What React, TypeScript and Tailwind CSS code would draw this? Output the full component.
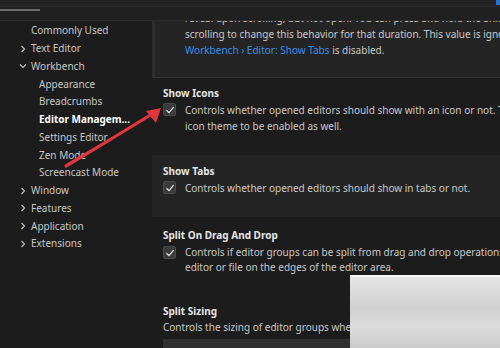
import React from "react";

const font = { fontFamily: '"Noto Sans", "Open Sans", sans-serif' };

function Chevron({ open }: { open?: boolean }) {
  return (
    <svg width="10" height="10" viewBox="0 0 10 10" className="shrink-0">
      {open ? (
        <path d="M2 3.5 L5 6.5 L8 3.5" fill="none" stroke="#c5c5c5" strokeWidth="1.1" />
      ) : (
        <path d="M3.5 2 L6.5 5 L3.5 8" fill="none" stroke="#c5c5c5" strokeWidth="1.1" />
      )}
    </svg>
  );
}

function Check() {
  return (
    <div className="w-[13px] h-[13px] mt-[1px] shrink-0 rounded-[2px] bg-[#3a3a3a] border border-[#4a4a4a] flex items-center justify-center">
      <svg width="10" height="10" viewBox="0 0 10 10">
        <path d="M1.5 5.2 L4 7.6 L8.6 2.2" fill="none" stroke="#e8e8e8" strokeWidth="1.2" />
      </svg>
    </div>
  );
}

type Item = { label: string; level: 0 | 1; chevron?: "open" | "closed"; active?: boolean };

const tree: Item[] = [
  { label: "Commonly Used", level: 0 },
  { label: "Text Editor", level: 0, chevron: "closed" },
  { label: "Workbench", level: 0, chevron: "open" },
  { label: "Appearance", level: 1 },
  { label: "Breadcrumbs", level: 1 },
  { label: "Editor Managem...", level: 1, active: true },
  { label: "Settings Editor", level: 1 },
  { label: "Zen Mode", level: 1 },
  { label: "Screencast Mode", level: 1 },
  { label: "Window", level: 0, chevron: "closed" },
  { label: "Features", level: 0, chevron: "closed" },
  { label: "Application", level: 0, chevron: "closed" },
  { label: "Extensions", level: 0, chevron: "closed" },
];

export default function App() {
  return (
    <div className="relative w-[500px] h-[348px] overflow-hidden bg-[#1c1c1c] text-[#c8c8c8] text-[10px]" style={font}>
      {/* header strip */}
      <div className="h-[7px] bg-[#232323] border-b border-[#2b2b2b]" />
      <div className="h-[14px] bg-[#202020] border-b border-[#2a2a2a] relative">
        <div className="absolute left-0 top-[2px] w-[40px] h-[2px] bg-[#6a6a6a]" />
        <div className="absolute right-0 top-[-8px] w-[4px] h-[6px] bg-[#2f6fc4]" />
      </div>

      <div className="flex h-[327px] overflow-hidden">
        {/* sidebar */}
        <div className="w-[152px] shrink-0 bg-[#1c1c1c] pt-[1px]">
          {tree.map((it) => (
            <div
              key={it.label}
              className={`flex items-center h-[17.75px] ${it.level === 0 ? "pl-[31px]" : "pl-[39px]"}`}
            >
              {it.chevron && (
                <span className="-ml-[13px] mr-[3px] flex">
                  <Chevron open={it.chevron === "open"} />
                </span>
              )}
              <span className={it.active ? "font-bold text-white" : "text-[#c8c8c8]"}>{it.label}</span>
            </div>
          ))}
        </div>

        {/* settings panel */}
        <div className="flex-1 flex flex-col">
          <div className="h-[57px] shrink-0 bg-[#242424] border-l-[3px] border-[#2e2e2e] border-b border-b-[#333] overflow-hidden pl-[30px] leading-[16px] whitespace-nowrap">
            <div className="-mt-[11px]">reveal upon scrolling, but not open. You can press and hold the Shift-key while</div>
            <div>scrolling to change this behavior for that duration. This value is ignored when</div>
            <div>
              <span className="text-[#3b8eea]">Workbench › Editor: Show Tabs</span> is disabled.
            </div>
          </div>

          <div className="h-[77px] shrink-0 pl-[11px] pt-[7px] leading-[16px]">
            <div className="font-bold text-[#e6e6e6]">Show Icons</div>
            <div className="flex gap-[9px] mt-[1px]">
              <Check />
              <div className="whitespace-nowrap">
                <div>Controls whether opened editors should show with an icon or not. This requires an</div>
                <div>icon theme to be enabled as well.</div>
              </div>
            </div>
          </div>

          <div className="h-[62px] shrink-0 bg-[#242424] pl-[11px] pt-[8px] leading-[16px]">
            <div className="font-bold text-[#e6e6e6]">Show Tabs</div>
            <div className="flex gap-[9px] mt-[1px]">
              <Check />
              <div className="whitespace-nowrap">Controls whether opened editors should show in tabs or not.</div>
            </div>
          </div>

          <div className="h-[78px] shrink-0 pl-[11px] pt-[10px] leading-[15px]">
            <div className="font-bold text-[#e6e6e6] leading-[16px]">Split On Drag And Drop</div>
            <div className="flex gap-[9px] mt-[2px]">
              <Check />
              <div className="whitespace-nowrap">
                <div>Controls if editor groups can be split from drag and drop operations by dropping an</div>
                <div>editor or file on the edges of the editor area.</div>
              </div>
            </div>
          </div>

          <div className="shrink-0 pl-[11px] pt-[8px] leading-[16px]">
            <div className="font-bold text-[#e6e6e6]">Split Sizing</div>
            <div className="whitespace-nowrap">Controls the sizing of editor groups when splitting them.</div>
            <div className="mt-[4px] w-[200px] h-[20px] bg-[#303030]" />
          </div>
        </div>
      </div>

      {/* watermark blur */}
      <div className="absolute left-[350px] top-[275px] w-[150px] h-[73px] border-t-2 border-[#f4f4f4] bg-[linear-gradient(180deg,#e4e4e4_0%,#d0d0d0_45%,#dcdcdc_70%,#cbcbcb_100%)]" />

      {/* red arrow annotation */}
      <svg className="absolute left-0 top-0 pointer-events-none" width="500" height="348">
        <path d="M66 166 Q110 140 152 114" fill="none" stroke="#e2363f" strokeWidth="3.2" strokeLinecap="round" />
        <path d="M161 108 L146 111 L156 123 Z" fill="#e2363f" />
      </svg>
    </div>
  );
}
